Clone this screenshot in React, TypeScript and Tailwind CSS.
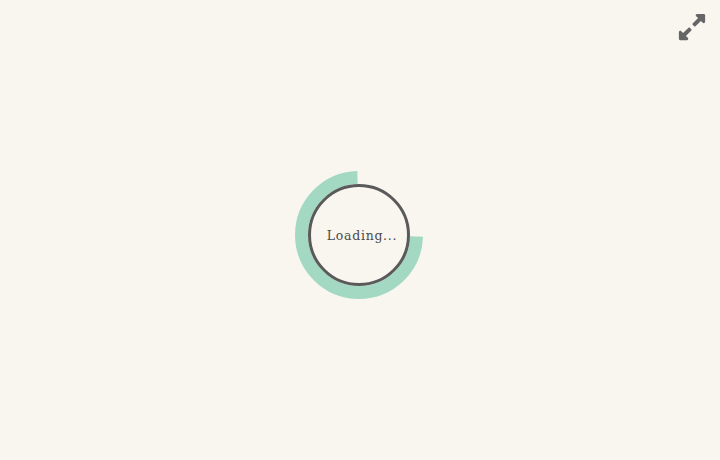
import React from "react";
import { FaExpandAlt } from "react-icons/fa";

export default function App() {
  return (
    <div className="relative w-[720px] h-[460px] bg-[#f9f6f0] flex items-center justify-center pt-[10px] pr-[2px]">
      <button className="absolute top-[12px] right-[13px] text-[#666666]">
        <FaExpandAlt size={30} />
      </button>
      <div className="relative w-[128px] h-[128px] flex items-center justify-center">
        <svg className="absolute inset-0" width="128" height="128" viewBox="0 0 128 128">
          <path d="M 62.5 6.5 A 57.5 57.5 0 1 0 121.5 65.5" fill="none" stroke="#a3d9c2" strokeWidth="13" />
        </svg>
        <div className="relative w-[102px] h-[102px] rounded-full border-[3px] border-[#5a5a5a] flex items-center justify-center">
          <span className="text-[12.5px] font-normal tracking-[0.7px] text-[#4a4a4a] [font-family:'DejaVu_Serif',serif] pt-[2px] pl-[6px]">Loading...</span>
        </div>
      </div>
    </div>
  );
}
